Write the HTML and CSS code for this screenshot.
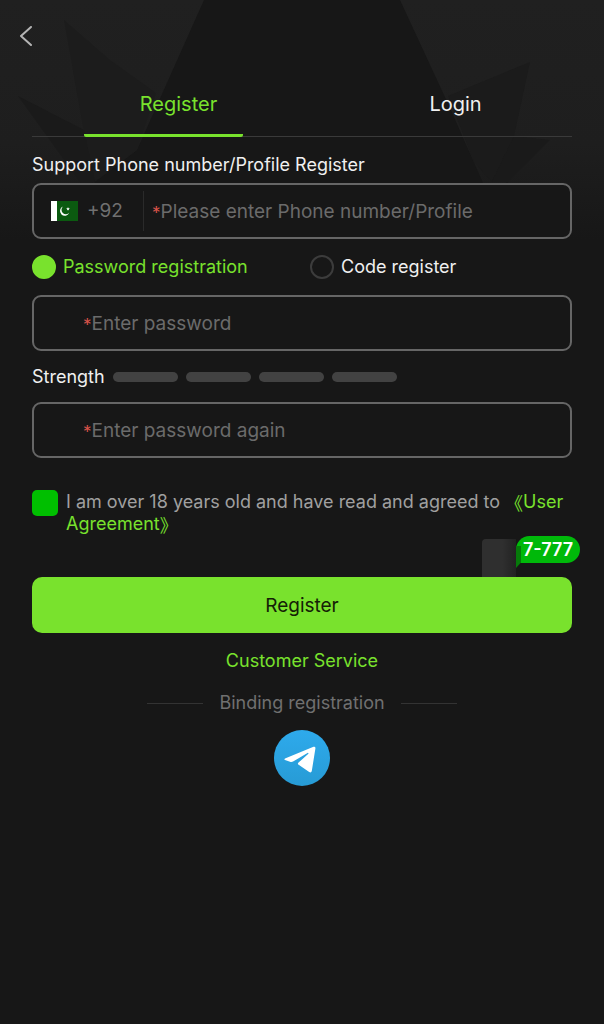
FILE: index.html
```html
<!DOCTYPE html>
<html lang="en">
<head>
    <meta charset="UTF-8">
    <meta name="viewport" content="width=device-width, initial-scale=1.0">
    <title>Register</title>
    <link rel="stylesheet" href="styles.css">
</head>
<body>

    <!-- Background shapes -->
    <svg class="backdrop" viewBox="0 0 604 300" aria-hidden="true">
        <defs>
            <linearGradient id="fade" x1="0" y1="0" x2="0" y2="240" gradientUnits="userSpaceOnUse">
                <stop offset="0" stop-color="#202020"/>
                <stop offset="0.6" stop-color="#1e1e1e"/>
                <stop offset="1" stop-color="#171717"/>
            </linearGradient>
        </defs>
        <rect width="604" height="240" fill="url(#fade)"/>
        <path d="M204 0H400L450 108L486 190L508 182H604V300H0V240L95 182L137 150Z" fill="#171717"/>
        <path d="M0 182H83L95 182L60 240H0Z" fill="url(#fade)"/>
        <path d="M550 140L508 182L480 240H604V120Z" fill="url(#fade)"/>
        <path d="M64 20L93 182L137 150L156 93L110 60Z" fill="#1c1c1c"/>
        <path d="M18 96L83 186L95 182L84 130Z" fill="#1a1a1a"/>
        <path d="M448 96L530 62L514 136L492 182L474 162Z" fill="#1b1b1b"/>
        <path d="M514 136L550 140L508 182H492Z" fill="#1a1a1a"/>
    </svg>

    <header class="topbar">
        <button class="back" type="button" aria-label="Back">
            <svg width="14" height="20" viewBox="0 0 14 20"><path d="M12 1L2 10L12 19" fill="none" stroke="#b4b4b4" stroke-width="2" stroke-linecap="round" stroke-linejoin="round"/></svg>
        </button>
    </header>

    <main>
        <nav class="tabs">
            <button class="tab active" type="button">Register</button>
            <button class="tab" type="button">Login</button>
        </nav>

        <form>
            <label class="title" for="phone">Support Phone number/Profile Register</label>
            <div class="field phone-field">
                <button class="country" type="button">
                    <svg class="flag" width="27" height="20" viewBox="0 0 27 20" aria-hidden="true">
                        <rect width="27" height="20" fill="#0b5a10"/>
                        <rect width="6" height="20" fill="#fff"/>
                        <path d="M12 5.500A4.800 4.800 0 1 0 18.300 11.600A4.400 4.400 0 1 1 12 5.500Z" fill="#fff"/>
                        <path d="M17 6L17.500 7.200L18.800 7.300L17.800 8.200L18.100 9.500L17 8.800L15.900 9.500L16.200 8.200L15.200 7.300L16.500 7.200Z" fill="#fff"/>
                    </svg>
                    <span>+92</span>
                </button>
                <label class="required" for="phone">*</label>
                <input id="phone" type="text" placeholder="Please enter Phone number/Profile">
            </div>

            <div class="modes">
                <label class="mode"><input type="radio" name="mode" checked><span>Password registration</span></label>
                <label class="mode"><input type="radio" name="mode"><span>Code register</span></label>
            </div>

            <div class="field password-field">
                <label class="required" for="password">*</label>
                <input id="password" type="password" placeholder="Enter password" aria-label="Enter password">
            </div>

            <div class="strength">
                <span>Strength</span>
                <i></i><i></i><i></i><i></i>
            </div>

            <div class="field password-field">
                <label class="required" for="password-again">*</label>
                <input id="password-again" type="password" placeholder="Enter password again" aria-label="Enter password again">
            </div>

            <div class="agreement">
                <input id="agree" type="checkbox" checked>
                <p><label for="agree">I am over 18 years old and have read and agreed to</label> <a href="#"><span class="quote">《</span>User Agreement<span class="quote">》</span></a></p>
            </div>

            <div class="submit">
                <button class="register" type="submit">Register</button>
                <div class="promo">
                    <span class="promo-card"></span>
                    <span class="promo-tag">7-777</span>
                </div>
            </div>
        </form>

        <a class="service" href="#">Customer Service</a>
        <div class="binding">Binding registration</div>
        <a class="telegram" href="#" aria-label="Telegram">
            <svg width="56" height="56" viewBox="0 0 56 56">
                <defs>
                    <linearGradient id="sky" x1="0" y1="0" x2="0" y2="1">
                        <stop offset="0" stop-color="#2eaaec"/>
                        <stop offset="1" stop-color="#279bd5"/>
                    </linearGradient>
                </defs>
                <circle cx="28" cy="28" r="28" fill="url(#sky)"/>
                <path d="M11 28.500L39.500 16.800Q41.600 16.200 41.400 18.500L37.800 41Q37.200 43.200 35.200 41.900L24.300 34.500Q23.500 33.800 24.300 32.800L34.400 23.700Q34.600 22.600 33.500 22.900L19.500 31.300Q17.800 32.200 16 31.700L11 30.100Q9.800 29.300 11 28.500Z" fill="#fff"/>
            </svg>
        </a>
    </main>

</body>
</html>
```

FILE: styles.css
```css
* {
    box-sizing: border-box;
}

body {
    margin: 0;
    min-height: 100vh;
    position: relative;
    background-color: #171717;
    color: #f0f0f0;
    font-family: Inter, "Noto Sans CJK SC", sans-serif;
    font-size: 18px;
    line-height: 22px;
}

button, input {
    margin: 0;
    padding: 0;
    border: none;
    background: none;
    color: inherit;
    font: inherit;
}

button {
    cursor: pointer;
}

a {
    color: #79e22d;
    text-decoration: none;
}

.backdrop {
    position: absolute;
    top: 0;
    left: 0;
    width: 100%;
    z-index: -1;
}

.topbar {
    padding: 16px 10px 0;
}

.back {
    display: flex;
    align-items: center;
    justify-content: center;
    width: 32px;
    height: 40px;
}

main {
    display: flex;
    flex-direction: column;
    align-items: center;
    padding: 16px 32px 32px;
}

.tabs {
    display: flex;
    justify-content: space-between;
    width: 100%;
    padding: 0 52px;
    border-bottom: 1px solid #3a3a3a;
}

.tab {
    width: 159px;
    height: 65px;
    padding: 2px 0 0 30px;
    margin-bottom: -1px;
    border-bottom: 3px solid transparent;
    border-radius: 2px;
    font-size: 20px;
}

.tab.active {
    color: #79e22d;
    border-bottom-color: #79e22d;
}

form {
    display: flex;
    flex-direction: column;
    width: 100%;
    padding-top: 17px;
}

.title {
    margin-bottom: 7px;
}

.field {
    display: flex;
    align-items: center;
    height: 56px;
    border: 2px solid #666;
    border-radius: 9px;
    background-color: #171717;
    color: #707070;
    font-size: 19px;
}

.field input {
    flex: 1;
    min-width: 0;
    height: 100%;
    outline: none;
}

.field input::placeholder {
    color: #6b6b6b;
    opacity: 1;
}

.required {
    padding-top: 3px;
    color: #d9534a;
    font-size: 17px;
}

.country {
    display: flex;
    align-items: center;
    gap: 9px;
    width: 110px;
    height: 40px;
    margin-right: 8px;
    padding-left: 17px;
    border-right: 1px solid #2a2a2a;
}

.password-field {
    padding-left: 49px;
}

.modes {
    display: grid;
    grid-template-columns: 278px 1fr;
    margin: 16px 0;
}

.mode {
    display: flex;
    align-items: center;
    gap: 7px;
}

.mode input {
    appearance: none;
    width: 24px;
    height: 24px;
    border: 2px solid #3c3c3c;
    border-radius: 50%;
}

.mode input:checked {
    border-color: #79e22d;
    background-color: #79e22d;
}

.mode input:checked + span {
    color: #79e22d;
}

.strength {
    display: flex;
    align-items: center;
    gap: 8px;
    margin: 15px 0 14px;
}

.strength i {
    width: 65px;
    height: 10px;
    border-radius: 5px;
    background-color: #424242;
}

.agreement {
    display: flex;
    gap: 8px;
    margin-top: 32px;
    color: #a0a0a0;
}

.agreement input {
    flex: none;
    appearance: none;
    width: 26px;
    height: 26px;
    border-radius: 5px;
    background-color: #333;
}

.agreement input:checked {
    background-color: #00bf00;
}

.agreement p {
    margin: 1px 0 0;
}

.quote {
    display: inline-block;
    height: 22px;
    font-family: "Noto Sans CJK SC", sans-serif;
    line-height: 22px;
    vertical-align: top;
}

.submit {
    position: relative;
    margin-top: 42px;
}

.register {
    width: 100%;
    height: 56px;
    padding-top: 2px;
    border-radius: 10px;
    background-color: #79e22d;
    color: #142006;
    font-size: 19px;
}

/* promo bubble over the top right corner of the button */
.promo {
    position: absolute;
    right: -8px;
    bottom: 100%;
    display: flex;
    align-items: flex-start;
}

.promo-card {
    width: 34px;
    height: 38px;
    margin-top: 3px;
    border-radius: 4px 0 0 0;
    background: linear-gradient(to right, #2f2f2f 60%, #222);
}

.promo-tag {
    width: 64px;
    height: 27px;
    border-radius: 14px 14px 14px 0;
    background-color: #00b90a;
    color: #fff;
    font-size: 18px;
    font-weight: 600;
    line-height: 27px;
    text-align: center;
}

.promo-tag::before {
    content: "";
    position: absolute;
    left: 34px;
    top: 10px;
    width: 5px;
    height: 22px;
    background-color: #067a0a;
    clip-path: polygon(0 0, 100% 0, 100% 75%, 0 100%);
}

.service {
    margin-top: 17px;
}

.binding {
    display: flex;
    align-items: center;
    gap: 16px;
    margin-top: 20px;
    color: #707070;
}

.binding::before, .binding::after {
    content: "";
    width: 56px;
    height: 1px;
    background-color: #333;
}

.telegram {
    display: flex;
    margin-top: 16px;
}
```
